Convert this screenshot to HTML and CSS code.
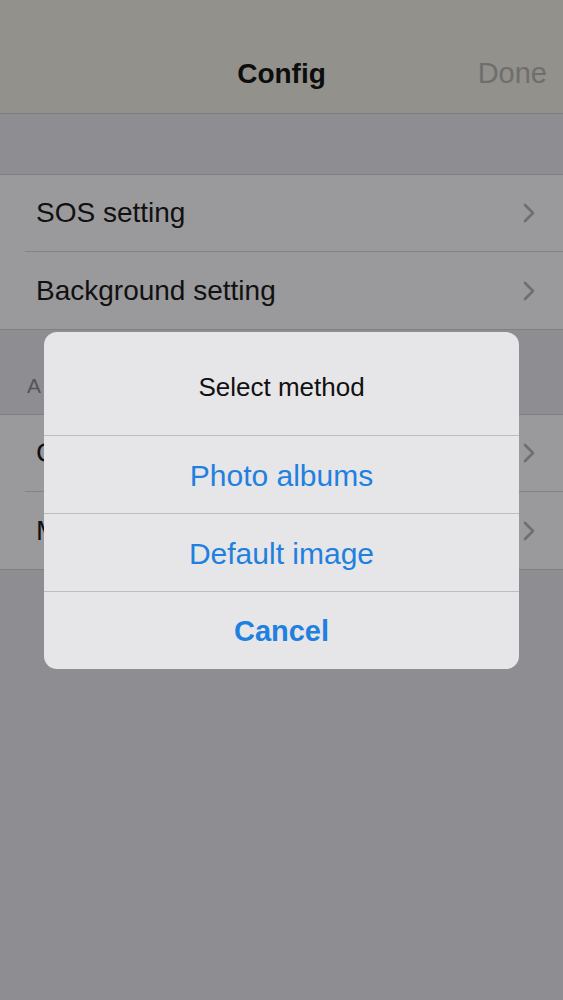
FILE: index.html
```html
<!DOCTYPE html>
<html>
<head>
<meta charset="utf-8">
<link rel="stylesheet" href="styles.css">
</head>
<body>
<div class="screen">
  <header class="navbar">
    <div class="nav-title">Config</div>
    <div class="nav-done">Done</div>
  </header>
  <div class="gap-top"></div>
  <div class="group">
    <div class="row"><span class="label">SOS setting</span><span class="chev"><svg width="12" height="20" viewBox="0 0 12 20"><path d="M2 2 L10 10 L2 18" fill="none" stroke="#6f6e71" stroke-width="2.6" stroke-linecap="round" stroke-linejoin="round"/></svg></span></div>
    <div class="row"><span class="label">Background setting</span><span class="chev"><svg width="12" height="20" viewBox="0 0 12 20"><path d="M2 2 L10 10 L2 18" fill="none" stroke="#6f6e71" stroke-width="2.6" stroke-linecap="round" stroke-linejoin="round"/></svg></span></div>
  </div>
  <div class="section-header">ABOUT</div>
  <div class="group">
    <div class="row"><span class="label">Contact us</span><span class="chev"><svg width="12" height="20" viewBox="0 0 12 20"><path d="M2 2 L10 10 L2 18" fill="none" stroke="#6f6e71" stroke-width="2.6" stroke-linecap="round" stroke-linejoin="round"/></svg></span></div>
    <div class="row"><span class="label">More</span><span class="chev"><svg width="12" height="20" viewBox="0 0 12 20"><path d="M2 2 L10 10 L2 18" fill="none" stroke="#6f6e71" stroke-width="2.6" stroke-linecap="round" stroke-linejoin="round"/></svg></span></div>
  </div>

  <div class="alert">
    <div class="alert-title">Select method</div>
    <div class="alert-btn">Photo albums</div>
    <div class="alert-btn">Default image</div>
    <div class="alert-btn cancel">Cancel</div>
  </div>
</div>
</body>
</html>
```

FILE: styles.css
```css
* { box-sizing: border-box; }
html, body {
  margin: 0;
  padding: 0;
  background: #8e8d92;
  font-family: "Liberation Sans", Arial, sans-serif;
}
.screen {
  position: relative;
  width: 563px;
  height: 1000px;
  overflow: hidden;
  background: #8e8d92;
}
.navbar {
  height: 114px;
  background: #93918c;
  border-bottom: 1px solid #7d7c7d;
  display: flex;
  align-items: flex-end;
  justify-content: center;
  position: relative;
  padding-bottom: 23px;
}
.nav-title {
  font-size: 28px;
  font-weight: bold;
  color: #0d0d0d;
}
.nav-done {
  position: absolute;
  right: 16px;
  bottom: 23px;
  font-size: 29px;
  color: #6f6e6c;
}
.gap-top {
  height: 60px;
}
.group {
  background: #9a999b;
  border-top: 1px solid #808083;
  border-bottom: 1px solid #808083;
}
.row {
  height: 77px;
  margin-left: 25px;
  padding-left: 11px;
  padding-right: 28px;
  display: flex;
  align-items: center;
  justify-content: space-between;
  border-bottom: 1px solid #838286;
}
.row:last-child {
  border-bottom: none;
}
.label {
  font-size: 28px;
  color: #111;
}
.chev {
  display: flex;
  align-items: center;
}
.section-header {
  height: 84px;
  padding-left: 27px;
  padding-bottom: 16px;
  display: flex;
  align-items: flex-end;
  font-size: 21px;
  color: #555457;
  letter-spacing: 3px;
}
.alert {
  position: absolute;
  left: 44px;
  top: 332px;
  width: 475px;
  background: #e6e6e8;
  border-radius: 13px;
  overflow: hidden;
  display: flex;
  flex-direction: column;
}
.alert-title {
  height: 103px;
  display: flex;
  align-items: center;
  justify-content: center;
  font-size: 26px;
  color: #111;
  padding-top: 8px;
}
.alert-btn {
  height: 78px;
  display: flex;
  align-items: center;
  justify-content: center;
  border-top: 1px solid #bdbdc0;
  font-size: 30px;
  color: #1f80e0;
  padding-top: 2px;
}
.alert-btn.cancel {
  font-weight: bold;
  font-size: 29px;
}
```
